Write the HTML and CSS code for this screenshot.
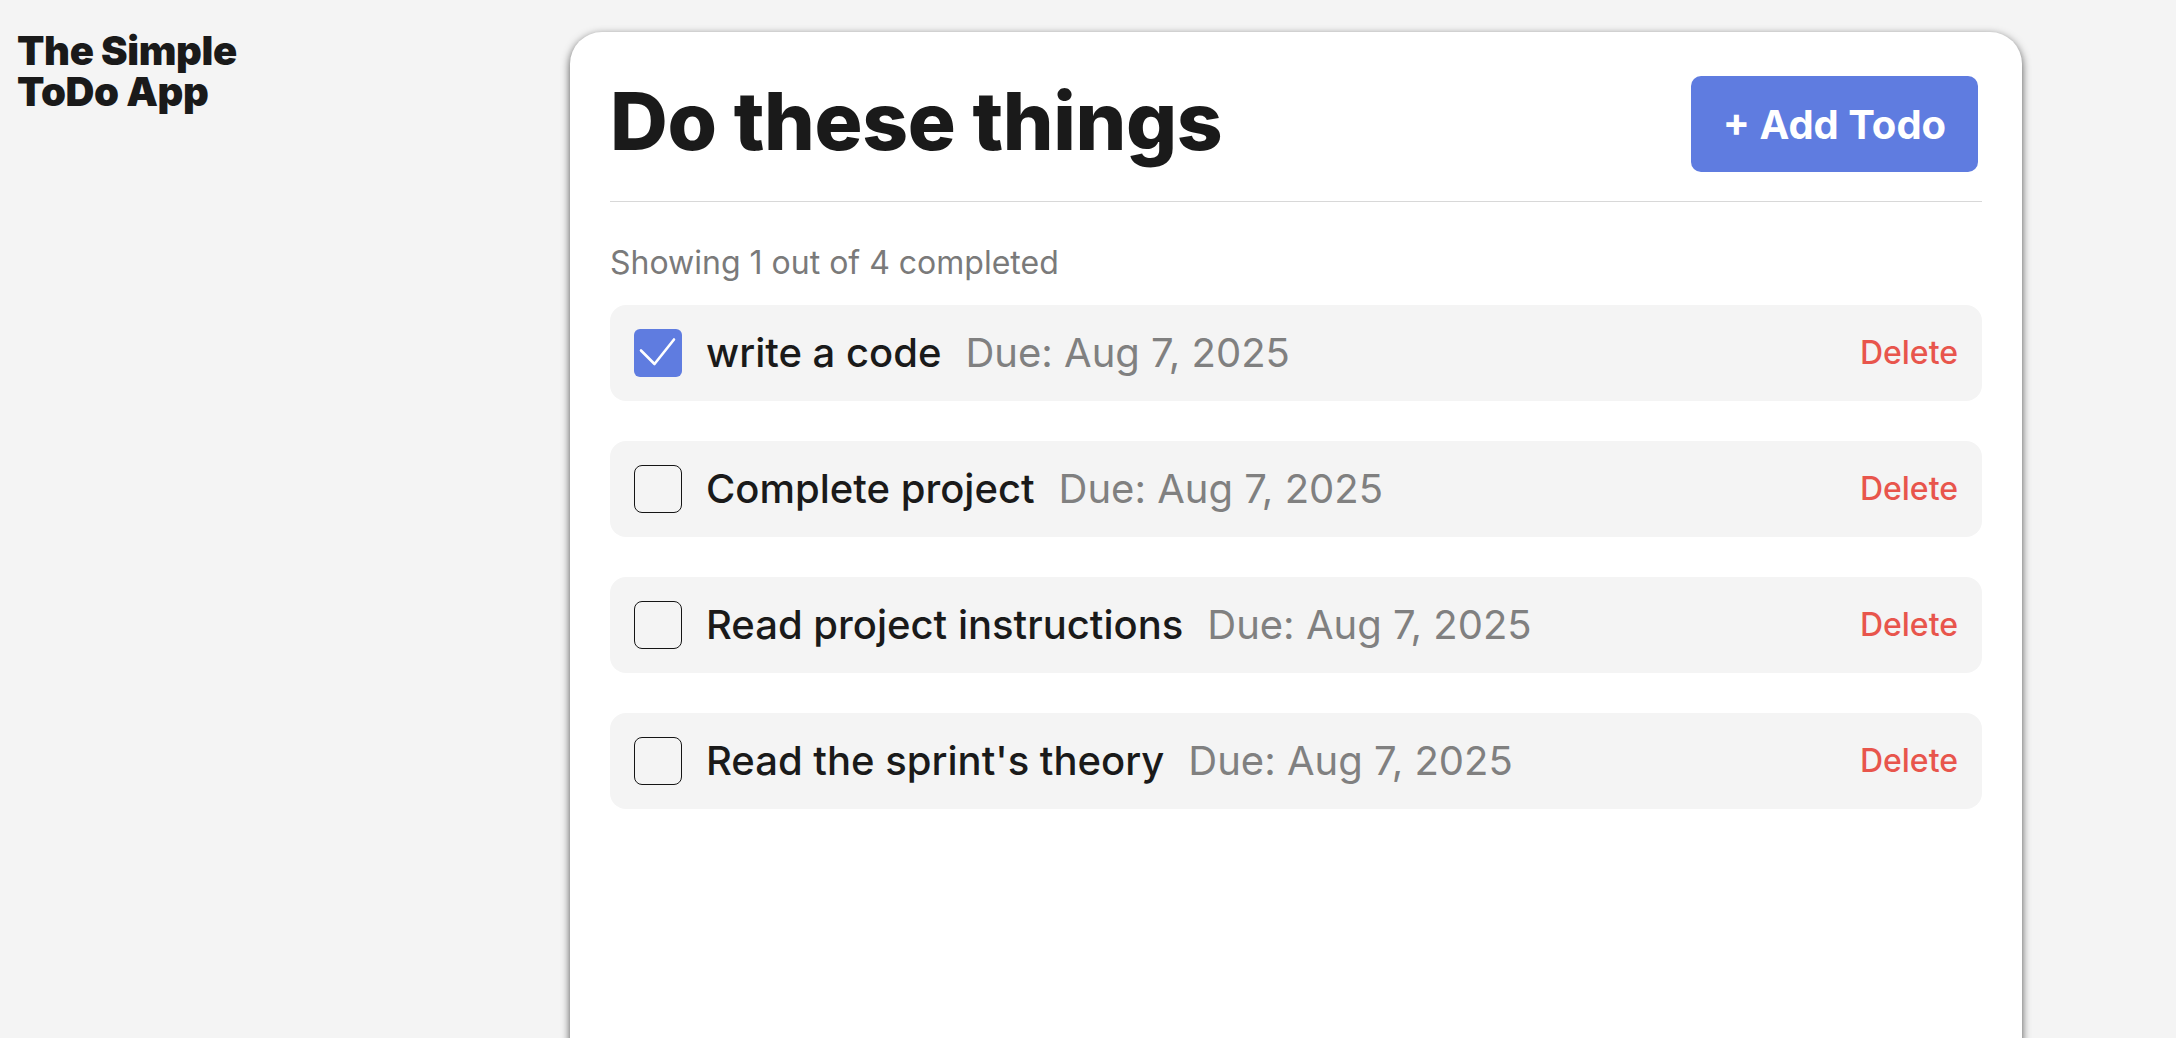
FILE: index.html
```html
<!DOCTYPE html>
<html lang="en">
<head>
<meta charset="utf-8">
<title>The Simple ToDo App</title>
<link rel="stylesheet" href="styles.css">
</head>
<body>
<div class="page">
  <aside class="brand"><span class="brand-line">The Simple</span><span class="brand-line">ToDo App</span></aside>
  <main class="card">
    <header class="card-head">
      <h1 class="title">Do these things</h1>
      <button class="add-btn" type="button">+ Add Todo</button>
    </header>
    <p class="summary">Showing 1 out of 4 completed</p>
    <ul class="todos">
      <li class="todo">
        <span class="check is-checked">
          <svg viewBox="0 0 48 48" width="48" height="48"><path d="M7 21.5 L20.5 35 L40 10.5" fill="none" stroke="#fff" stroke-width="2.6" stroke-linecap="round" stroke-linejoin="round"/></svg>
        </span>
        <span class="todo-name">write a code</span>
        <span class="todo-due">Due: Aug 7, 2025</span>
        <button class="del-btn" type="button">Delete</button>
      </li>
      <li class="todo">
        <span class="check"></span>
        <span class="todo-name">Complete project</span>
        <span class="todo-due">Due: Aug 7, 2025</span>
        <button class="del-btn" type="button">Delete</button>
      </li>
      <li class="todo">
        <span class="check"></span>
        <span class="todo-name">Read project instructions</span>
        <span class="todo-due">Due: Aug 7, 2025</span>
        <button class="del-btn" type="button">Delete</button>
      </li>
      <li class="todo">
        <span class="check"></span>
        <span class="todo-name">Read the sprint's theory</span>
        <span class="todo-due">Due: Aug 7, 2025</span>
        <button class="del-btn" type="button">Delete</button>
      </li>
    </ul>
  </main>
</div>
</body>
</html>
```
FILE: styles.css
```css
* { box-sizing: border-box; }

html, body {
  margin: 0;
  padding: 0;
  background: #f4f4f4;
  font-family: Inter, "Noto Sans", sans-serif;
  color: #1a1a1a;
  overflow: hidden;
}

.page {
  display: grid;
  grid-template-columns: 553px 1452px;
  align-items: start;
  padding: 30px 0 0 17px;
}

.brand {
  display: flex;
  flex-direction: column;
  font-size: 40px;
  font-weight: 900;
  line-height: 41px;
  letter-spacing: -0.01em;
  color: #1a1a1a;
}

.brand-line { display: block; }

.card {
  margin-top: 2px;
  background: #ffffff;
  border-radius: 32px;
  box-shadow: 0 3px 8px rgba(0, 0, 0, 0.68);
  padding: 40px;
  min-height: 1200px;
}

.card-head {
  display: flex;
  justify-content: space-between;
  align-items: flex-start;
  padding-bottom: 25px;
  border-bottom: 1px solid #d8d8d8;
}

.title {
  margin: 0;
  font-size: 80px;
  font-weight: 800;
  line-height: 97px;
  letter-spacing: -0.005em;
  color: #1a1a1a;
}

.add-btn {
  margin: 4px;
  width: 287px;
  height: 96px;
  border: 0;
  border-radius: 10px;
  background: #5f7ce0;
  color: #ffffff;
  font-family: Inter, "Noto Sans", sans-serif;
  font-size: 40px;
  font-weight: 700;
  cursor: pointer;
}

.summary {
  margin: 41px 0 23px;
  font-size: 32px;
  line-height: 39px;
  color: #7a7a7a;
}

.todos {
  list-style: none;
  margin: 0;
  padding: 0;
  display: flex;
  flex-direction: column;
  gap: 40px;
}

.todo {
  display: flex;
  align-items: center;
  gap: 24px;
  padding: 24px;
  border-radius: 16px;
  background: #f4f4f4;
}

.check {
  flex: none;
  width: 48px;
  height: 48px;
  border: 1.8px solid #151515;
  border-radius: 8px;
}

.check.is-checked {
  border: 0;
  border-radius: 6px;
  background: #5f7ce0;
}

.check svg { display: block; }

.todo-name {
  font-size: 40px;
  font-weight: 500;
  line-height: 48px;
  color: #1a1a1a;
}

.todo-due {
  font-size: 40px;
  font-weight: 400;
  line-height: 48px;
  color: #808080;
}

.del-btn {
  margin-left: auto;
  border: 0;
  padding: 0;
  background: none;
  font-family: Inter, "Noto Sans", sans-serif;
  font-size: 32px;
  font-weight: 500;
  line-height: 38px;
  color: #e8554c;
  cursor: pointer;
}
```
